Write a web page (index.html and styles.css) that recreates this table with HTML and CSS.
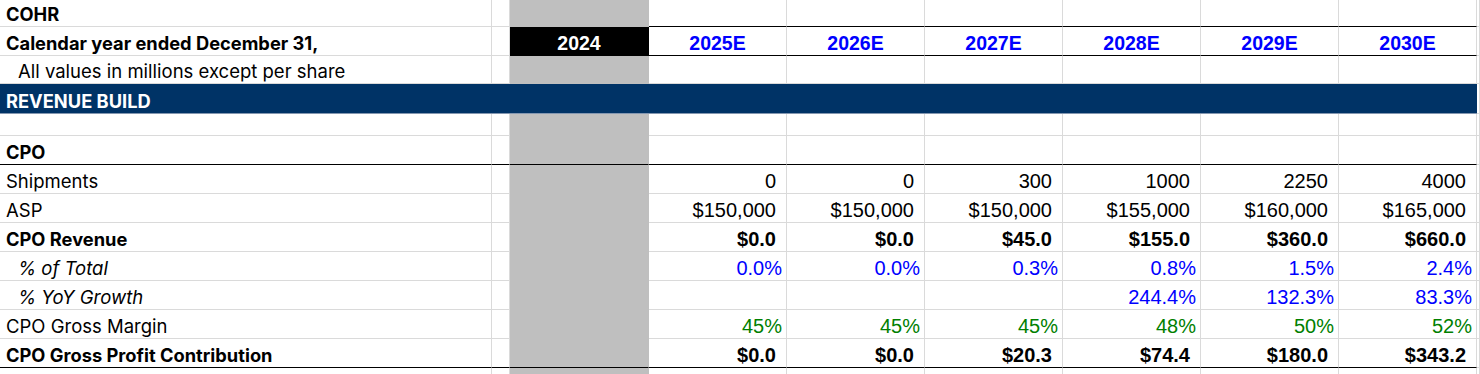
FILE: index.html
```html
<!DOCTYPE html>
<html lang="en">
<head>
<meta charset="utf-8">
<title>COHR Revenue Build</title>
<link rel="stylesheet" href="styles.css">
</head>
<body>
<div class="sheet">
  <div class="row r-first">
    <div class="c lbl b">COHR</div>
    <div class="c"></div>
    <div class="c grey"></div>
    <div class="c tb"></div><div class="c tb"></div><div class="c tb"></div><div class="c tb"></div><div class="c tb"></div><div class="c tb"></div>
    <div class="c"></div>
  </div>
  <div class="row">
    <div class="c lbl b">Calendar year ended December 31,</div>
    <div class="c"></div>
    <div class="c hist">2024</div>
    <div class="c yr tb">2025E</div>
    <div class="c yr tb">2026E</div>
    <div class="c yr tb">2027E</div>
    <div class="c yr tb">2028E</div>
    <div class="c yr tb">2029E</div>
    <div class="c yr tb">2030E</div>
    <div class="c"></div>
  </div>
  <div class="row r-note">
    <div class="c lbl ind">All values in millions except per share</div>
    <div class="c"></div>
    <div class="c grey"></div>
    <div class="c"></div><div class="c"></div><div class="c"></div><div class="c"></div><div class="c"></div><div class="c"></div>
    <div class="c"></div>
  </div>
  <div class="row r-band">
    <div class="c band">REVENUE BUILD</div>
    <div class="c"></div>
  </div>
  <div class="row r-spacer">
    <div class="c"></div>
    <div class="c"></div>
    <div class="c grey"></div>
    <div class="c"></div><div class="c"></div><div class="c"></div><div class="c"></div><div class="c"></div><div class="c"></div>
    <div class="c"></div>
  </div>
  <div class="row">
    <div class="c lbl b tb">CPO</div>
    <div class="c tb"></div>
    <div class="c grey tb"></div>
    <div class="c tb"></div><div class="c tb"></div><div class="c tb"></div><div class="c tb"></div><div class="c tb"></div><div class="c tb"></div>
    <div class="c"></div>
  </div>
  <div class="row">
    <div class="c lbl">Shipments</div>
    <div class="c"></div>
    <div class="c grey"></div>
    <div class="c num">0</div>
    <div class="c num">0</div>
    <div class="c num">300</div>
    <div class="c num">1000</div>
    <div class="c num">2250</div>
    <div class="c num">4000</div>
    <div class="c"></div>
  </div>
  <div class="row">
    <div class="c lbl">ASP</div>
    <div class="c"></div>
    <div class="c grey"></div>
    <div class="c num">$150,000</div>
    <div class="c num">$150,000</div>
    <div class="c num">$150,000</div>
    <div class="c num">$155,000</div>
    <div class="c num">$160,000</div>
    <div class="c num">$165,000</div>
    <div class="c"></div>
  </div>
  <div class="row">
    <div class="c lbl b">CPO Revenue</div>
    <div class="c"></div>
    <div class="c grey"></div>
    <div class="c num b">$0.0</div>
    <div class="c num b">$0.0</div>
    <div class="c num b">$45.0</div>
    <div class="c num b">$155.0</div>
    <div class="c num b">$360.0</div>
    <div class="c num b">$660.0</div>
    <div class="c"></div>
  </div>
  <div class="row">
    <div class="c lbl ind it">% of Total</div>
    <div class="c"></div>
    <div class="c grey"></div>
    <div class="c pct blue">0.0%</div>
    <div class="c pct blue">0.0%</div>
    <div class="c pct blue">0.3%</div>
    <div class="c pct blue">0.8%</div>
    <div class="c pct blue">1.5%</div>
    <div class="c pct blue">2.4%</div>
    <div class="c"></div>
  </div>
  <div class="row">
    <div class="c lbl ind it">% YoY Growth</div>
    <div class="c"></div>
    <div class="c grey"></div>
    <div class="c pct blue"></div>
    <div class="c pct blue"></div>
    <div class="c pct blue"></div>
    <div class="c pct blue">244.4%</div>
    <div class="c pct blue">132.3%</div>
    <div class="c pct blue">83.3%</div>
    <div class="c"></div>
  </div>
  <div class="row">
    <div class="c lbl">CPO Gross Margin</div>
    <div class="c"></div>
    <div class="c grey"></div>
    <div class="c pct green">45%</div>
    <div class="c pct green">45%</div>
    <div class="c pct green">45%</div>
    <div class="c pct green">48%</div>
    <div class="c pct green">50%</div>
    <div class="c pct green">52%</div>
    <div class="c"></div>
  </div>
  <div class="row">
    <div class="c lbl b tb">CPO Gross Profit Contribution</div>
    <div class="c tb"></div>
    <div class="c grey tb"></div>
    <div class="c num b tb">$0.0</div>
    <div class="c num b tb">$0.0</div>
    <div class="c num b tb">$20.3</div>
    <div class="c num b tb">$74.4</div>
    <div class="c num b tb">$180.0</div>
    <div class="c num b tb">$343.2</div>
    <div class="c"></div>
  </div>
  <div class="row">
    <div class="c"></div>
    <div class="c"></div>
    <div class="c grey"></div>
    <div class="c"></div><div class="c"></div><div class="c"></div><div class="c"></div><div class="c"></div><div class="c"></div>
    <div class="c"></div>
  </div>
</div>
</body>
</html>
```

FILE: styles.css
```css
html, body {
  margin: 0;
  padding: 0;
  background: #ffffff;
}

body {
  width: 1480px;
  height: 374px;
  overflow: hidden;
  font-family: Inter, "Liberation Sans", sans-serif;
  color: #000000;
}

.sheet {
  display: flex;
  flex-direction: column;
}

.row {
  display: grid;
  grid-template-columns: 492px 18px 139px repeat(6, 138px) 1fr;
  height: 29px;
  flex: none;
}

.r-first { height: 27px; }
.r-note { height: 28px; }
.r-band { height: 30px; }
.r-spacer { height: 22px; }

.c {
  box-sizing: border-box;
  border-right: 1px solid #dadada;
  border-bottom: 1px solid #dadada;
  display: flex;
  align-items: flex-end;
  padding: 0 0 2px 0;
  white-space: nowrap;
  font-size: 18.5px;
  line-height: 20px;
  min-width: 0;
}

.lbl {
  padding-left: 6px;
  font-family: Inter, "Liberation Sans", sans-serif;
}

.lbl.b { font-size: 18.3px; }

.ind { padding-left: 18px; }
.it { font-style: italic; }
.b { font-weight: 700; }

.grey {
  background: #bfbfbf;
  border-right-color: #bfbfbf;
  border-bottom-color: #bfbfbf;
}

.tb { border-bottom-color: #000000; }
.grey.tb { border-bottom-color: #000000; }

.hist {
  background: #000000;
  border-right-color: #000000;
  border-bottom-color: #000000;
  color: #ffffff;
  justify-content: center;
  font-family: "Liberation Sans", Arial, sans-serif;
  font-weight: 700;
  font-size: 19.5px;
}

.yr {
  justify-content: center;
  color: #0000ff;
  font-family: "Liberation Sans", Arial, sans-serif;
  font-weight: 700;
  font-size: 19.5px;
}

.num, .pct {
  justify-content: flex-end;
  font-family: "Liberation Sans", Arial, sans-serif;
  font-size: 20px;
}

.num { padding-right: 10px; }
.pct { padding-right: 4px; }

.blue { color: #0000ff; }
.green { color: #008000; }

.band {
  grid-column: 1 / 10;
  background: #003366;
  color: #ffffff;
  font-weight: 700;
  font-size: 18.3px;
  padding-left: 6px;
  border-right: none;
  border-bottom-color: #8497b0;
}
```
